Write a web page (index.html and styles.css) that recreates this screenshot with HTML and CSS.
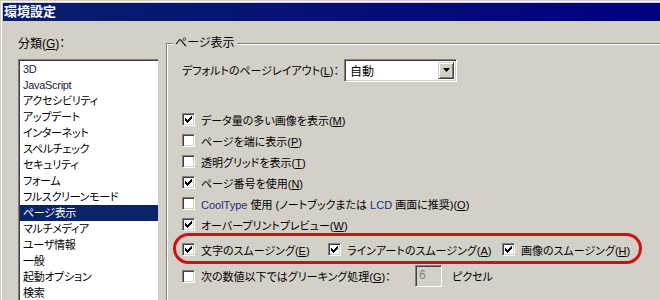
FILE: index.html
```html
<!DOCTYPE html>
<html lang="ja">

<head>
    <meta charset="UTF-8">
    <title>環境設定</title>
    <link rel="stylesheet" href="styles.css">
</head>

<body>
    <div class="window">
        <div class="titlebar">環境設定</div>
        <div class="content">
            <div class="sidebar">
                <div class="sideLabel">分類(<u>G</u>)：</div>
                <ul class="catList">
                    <li class="latin">3D</li>
                    <li class="latin">JavaScript</li>
                    <li>アクセシビリティ</li>
                    <li>アップデート</li>
                    <li>インターネット</li>
                    <li>スペルチェック</li>
                    <li>セキュリティ</li>
                    <li>フォーム</li>
                    <li>フルスクリーンモード</li>
                    <li class="selected">ページ表示</li>
                    <li>マルチメディア</li>
                    <li>ユーザ情報</li>
                    <li>一般</li>
                    <li>起動オプション</li>
                    <li>検索</li>
                </ul>
            </div>

            <fieldset class="group">
                <legend>ページ表示</legend>
                <div class="groupBody">
                    <div class="layoutRow">
                        <span class="layoutLabel">デフォルトのページレイアウト(<u>L</u>)：</span>
                        <div class="combo">
                            <span class="comboValue">自動</span>
                            <span class="comboBtn">
                                <svg width="7" height="4" viewBox="0 0 7 4"><path d="M0 0h7L3.5 4z" /></svg>
                            </span>
                        </div>
                    </div>

                    <!-- オプション -->
                    <div class="checks">
                        <div class="check">
                            <span class="box"><svg width="7" height="7" viewBox="0 0 7 7"><polygon points="0,2 2,4 7,-1 7,2 2,7 0,5" /></svg></span>
                            <span>データ量の多い画像を表示(<u>M</u>)</span>
                        </div>
                        <div class="check">
                            <span class="box"></span>
                            <span>ページを端に表示(<u>P</u>)</span>
                        </div>
                        <div class="check">
                            <span class="box"></span>
                            <span>透明グリッドを表示(<u>T</u>)</span>
                        </div>
                        <div class="check">
                            <span class="box"><svg width="7" height="7" viewBox="0 0 7 7"><polygon points="0,2 2,4 7,-1 7,2 2,7 0,5" /></svg></span>
                            <span>ページ番号を使用(<u>N</u>)</span>
                        </div>
                        <div class="check">
                            <span class="box"></span>
                            <span><span class="latin blue">CoolType</span> 使用 (ノートブックまたは <span class="latin blue">LCD</span> 画面に推奨)(<u>O</u>)</span>
                        </div>
                        <div class="check">
                            <span class="box"><svg width="7" height="7" viewBox="0 0 7 7"><polygon points="0,2 2,4 7,-1 7,2 2,7 0,5" /></svg></span>
                            <span>オーバープリントプレビュー(<u>W</u>)</span>
                        </div>
                    </div>

                    <div class="smoothRow">
                        <div class="ring"></div>
                        <div class="check">
                            <span class="box"><svg width="7" height="7" viewBox="0 0 7 7"><polygon points="0,2 2,4 7,-1 7,2 2,7 0,5" /></svg></span>
                            <span>文字のスムージング(<u>E</u>)</span>
                        </div>
                        <div class="check">
                            <span class="box"><svg width="7" height="7" viewBox="0 0 7 7"><polygon points="0,2 2,4 7,-1 7,2 2,7 0,5" /></svg></span>
                            <span>ラインアートのスムージング(<u>A</u>)</span>
                        </div>
                        <div class="check">
                            <span class="box"><svg width="7" height="7" viewBox="0 0 7 7"><polygon points="0,2 2,4 7,-1 7,2 2,7 0,5" /></svg></span>
                            <span>画像のスムージング(<u>H</u>)</span>
                        </div>
                    </div>

                    <div class="greekRow">
                        <div class="check greekCheck">
                            <span class="box"></span>
                            <span>次の数値以下ではグリーキング処理(<u>G</u>)：</span>
                        </div>
                        <div class="numBox">6</div>
                        <span>ピクセル</span>
                    </div>
                </div>
            </fieldset>
        </div>
    </div>
</body>

</html>
```

FILE: styles.css
```css
body {
    margin: 0;
    font-family: "Liberation Sans", "Noto Sans CJK JP", sans-serif;
    font-size: 11px;
    font-feature-settings: "palt" 1;
    color: #000;
    white-space: nowrap;
}

.window {
    width: 660px;
    height: 300px;
    overflow: hidden;
    box-sizing: border-box;
    padding: 3px 0 0 3px;
    background-color: #d4d0c8;
    box-shadow: inset 1px 1px 0 #d4d0c8, inset 2px 2px 0 #fff;
}

.titlebar {
    height: 18px;
    line-height: 18px;
    padding-left: 1px;
    font-size: 13px;
    font-weight: bold;
    color: #fff;
    background: linear-gradient(to right, #0a1f6c, #000080);
}

.content {
    display: flex;
    gap: 8px;
}

.sidebar {
    width: 140px;
    padding-left: 15px;
    flex-shrink: 0;
}

.sideLabel {
    margin-top: 16px;
    line-height: 14px;
    font-size: 12px;
}

u {
    text-decoration: underline;
}

.catList {
    list-style: none;
    margin: 8px 0 0;
    padding: 1px 0 0 1px;
    height: 260px;
    background-color: #fff;
    border-top: 1px solid #808080;
    border-left: 1px solid #808080;
    box-shadow: inset 1px 1px 0 #404040;
}

.catList li {
    height: 16px;
    line-height: 16px;
    padding-left: 3px;
    letter-spacing: -0.3px;
}

.catList .selected {
    background-color: #0a246a;
    color: #fff;
}

.latin {
    color: #20204a;
}

.blue {
    color: #1d2c78;
}

.group {
    flex: 1;
    margin: 15px 0 0;
    padding: 0;
    min-width: 0;
    border: none;
    border-top: 1px solid #808080;
    border-left: 1px solid #808080;
    box-shadow: inset 1px 1px 0 #fff;
}

.group legend {
    margin-left: 6px;
    padding: 0 2px;
    line-height: 14px;
    font-size: 12px;
    background-color: #d4d0c8;
}

.groupBody {
    padding-left: 15px;
}

.layoutRow {
    display: flex;
    align-items: center;
    margin-top: 9px;
    height: 22px;
}

.layoutLabel {
    width: 162px;
}

.combo {
    display: flex;
    align-items: center;
    box-sizing: border-box;
    width: 113px;
    height: 23px;
    padding: 2px;
    background-color: #fff;
    border: 1px solid;
    border-color: #808080 #fff #fff #808080;
    box-shadow: inset 1px 1px 0 #404040, inset -1px -1px 0 #d4d0c8;
}

.comboValue {
    flex: 1;
    padding-left: 3px;
    font-size: 12px;
}

.comboBtn {
    display: flex;
    align-items: center;
    justify-content: center;
    width: 16px;
    height: 17px;
    box-sizing: border-box;
    background-color: #d4d0c8;
    border: 1px solid;
    border-color: #d4d0c8 #404040 #404040 #d4d0c8;
    box-shadow: inset 1px 1px 0 #fff, inset -1px -1px 0 #808080;
}

.checks {
    margin-top: 28px;
}

.check {
    display: flex;
    align-items: center;
    gap: 6px;
    height: 21px;
}

.box {
    display: flex;
    align-items: center;
    justify-content: center;
    flex-shrink: 0;
    box-sizing: border-box;
    width: 13px;
    height: 13px;
    background-color: #fff;
    border: 1px solid;
    border-color: #808080 #fff #fff #808080;
    box-shadow: inset 1px 1px 0 #404040, inset -1px -1px 0 #d4d0c8;
}

.box svg {
    shape-rendering: crispEdges;
}

.smoothRow {
    position: relative;
    display: grid;
    grid-template-columns: 146px 174px auto;
    margin-top: 4px;
}

.ring {
    position: absolute;
    left: -9px;
    top: -6px;
    width: 469px;
    height: 31px;
    box-sizing: border-box;
    border: 3px solid #c81414;
    border-radius: 16px;
}

.greekRow {
    display: flex;
    align-items: center;
    margin-top: 5px;
    height: 22px;
}

.greekCheck {
    width: 233px;
}

.numBox {
    box-sizing: border-box;
    width: 27px;
    height: 22px;
    line-height: 18px;
    padding-left: 3px;
    margin-right: 10px;
    font-size: 12px;
    color: #808080;
    border: 1px solid;
    border-color: #808080 #fff #fff #808080;
    box-shadow: inset 1px 1px 0 #404040, inset -1px -1px 0 #d4d0c8;
}
```
